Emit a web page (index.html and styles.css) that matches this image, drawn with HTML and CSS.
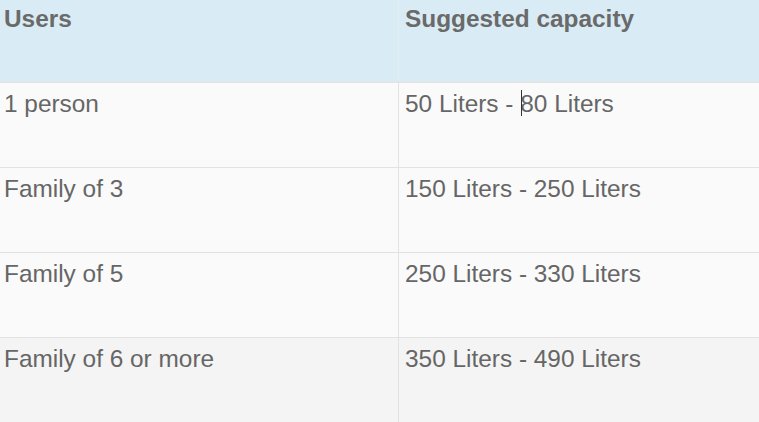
FILE: index.html
```html
<!DOCTYPE html>
<html>
<head>
<meta charset="utf-8">
<link rel="stylesheet" href="styles.css">
</head>
<body>
<table class="cap-table">
  <thead>
    <tr><th class="col-users">Users</th><th>Suggested capacity</th></tr>
  </thead>
  <tbody>
    <tr><td>1 person</td><td>50 Liters - <span class="caret-wrap"><span class="caret"></span>80</span> Liters</td></tr>
    <tr><td>Family of 3</td><td>150 Liters - 250 Liters</td></tr>
    <tr><td>Family of 5</td><td>250 Liters - 330 Liters</td></tr>
    <tr class="last"><td>Family of 6 or more</td><td>350 Liters - 490 Liters</td></tr>
  </tbody>
</table>
</body>
</html>
```
FILE: styles.css
```css
html, body { margin: 0; padding: 0; background: #fafafa; }
body { font-family: "Liberation Sans", Arial, sans-serif; color: #666; overflow: hidden; }
.cap-table { border-collapse: collapse; width: 760px; table-layout: fixed; }
.cap-table th, .cap-table td {
  text-align: left; vertical-align: top; font-size: 24.4px; line-height: 28px;
  padding: 7px 6px 0 4px; border-right: 1px solid #e2e2e2; border-bottom: 1px solid #e2e2e2;
}
.cap-table td + td, .cap-table th + th { padding-left: 6px; }
.col-users { width: 388px; }
.cap-table th { background: #d9ecf5; height: 76px; padding-top: 5px; font-weight: bold; color: #6a6a6a; border-bottom: 2px solid #e0e6e8; border-right-color: #e3eef3; }
.cap-table td { background: #fafafa; height: 77px; }
.cap-table tr.last td { background: #f4f4f4; }
.caret-wrap { position: relative; }
.caret { position: absolute; left: 1px; top: 0; width: 1px; height: 26px; background: #333; }
```
